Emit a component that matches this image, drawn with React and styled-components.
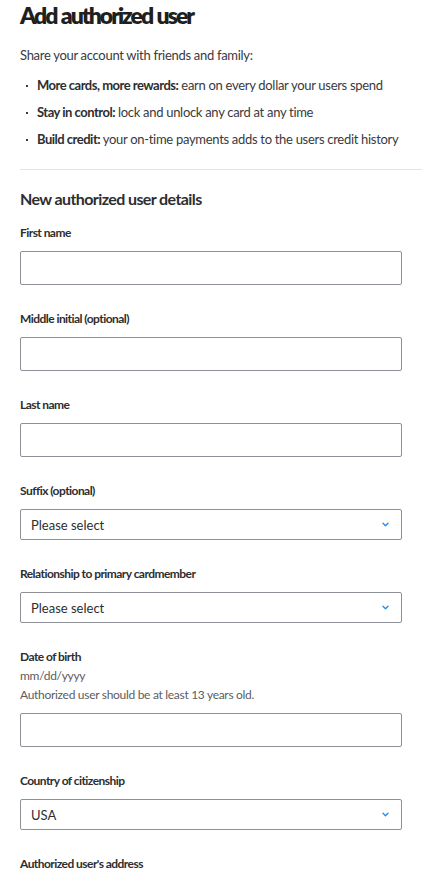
import styled, {createGlobalStyle} from "styled-components";

const GlobalStyle = createGlobalStyle`
  body {
    margin: 0;
    background: #ffffff;
    font-family: Lato, "Open Sans", Arial, sans-serif;
    color: #393a3d;
  }
`

const Page = styled.div`
  padding-left: 20px;
  overflow: hidden;
`

const Title = styled.h1`
  margin: 0;
  font-size: 23px;
  line-height: 30px;
  font-weight: 800;
  letter-spacing: -2px;
  word-spacing: 1px;
  color: #1f1f21;
`

const Intro = styled.p`
  margin: 16px 0 0;
  font-size: 13px;
  line-height: 18px;
  letter-spacing: -0.3px;
  color: #393a3d;
`

const Benefits = styled.ul`
  list-style: none;
  margin: 12px 0 0;
  padding: 0 0 0 6px;
  display: flex;
  flex-direction: column;
  gap: 9px;
`

const Benefit = styled.li`
  position: relative;
  padding-left: 11px;
  font-size: 13px;
  line-height: 18px;
  letter-spacing: -0.3px;
  white-space: nowrap;
  color: #393a3d;

  &::before {
    content: "";
    position: absolute;
    left: 0;
    top: 9px;
    width: 2px;
    height: 2px;
    background: #393a3d;
  }

  b {
    font-weight: 700;
    letter-spacing: -0.5px;
    color: #2d2e30;
  }
`

const Divider = styled.hr`
  border: 0;
  border-top: 1px solid #e3e5e8;
  margin: 21px 0 0;
`

const Form = styled.div`
  padding-right: 20px;
`

const SectionTitle = styled.h2`
  margin: 18px 0 0;
  font-size: 16px;
  line-height: 22px;
  font-weight: 700;
  letter-spacing: -0.6px;
  color: #2d2e30;
`

const FieldBlock = styled.div`
  margin-top: ${p => p.$first ? "14px" : "25px"};
  display: flex;
  flex-direction: column;
`

const Label = styled.label`
  font-size: 12px;
  line-height: 18px;
  font-weight: 700;
  letter-spacing: -0.55px;
  color: #2d2e30;
  margin-bottom: ${p => p.$hinted ? "0" : "9px"};
`

const Hint = styled.div`
  font-size: 12px;
  line-height: 18px;
  letter-spacing: -0.3px;
  color: #5c5d60;
  margin-top: 1px;
  margin-bottom: ${p => p.$last ? "9px" : "0"};
`

const TextInput = styled.input`
  box-sizing: border-box;
  width: 100%;
  height: 34px;
  margin: 0;
  border: 1px solid #8d9096;
  border-radius: 2px;
  background: #fff;
  padding: 0 10px;
  font-family: inherit;
  font-size: 13px;
`

const SelectBox = styled.div`
  box-sizing: border-box;
  width: 100%;
  height: 31px;
  border: 1px solid #8d9096;
  border-radius: 2px;
  background: #fff;
  padding: 0 12px 0 10px;
  display: flex;
  align-items: center;
  justify-content: space-between;
  font-size: 13px;
  color: #2d2e30;
`

const Chevron = () => (
    <svg width="7" height="5" viewBox="0 0 7 5">
        <path d="M1 1.2l2.5 2.5 2.5-2.5" fill="none" stroke="#2b8ae6" strokeWidth="1.4" strokeLinecap="round" strokeLinejoin="round"/>
    </svg>
)

const fields = [
    {label: "First name", type: "input"},
    {label: "Middle initial (optional)", type: "input"},
    {label: "Last name", type: "input"},
    {label: "Suffix (optional)", type: "select", value: "Please select"},
    {label: "Relationship to primary cardmember", type: "select", value: "Please select"},
    {label: "Date of birth", type: "input", hints: ["mm/dd/yyyy", "Authorized user should be at least 13 years old."]},
    {label: "Country of citizenship", type: "select", value: "USA"},
]

const App = () => {
    return (
        <Page>
            <GlobalStyle/>
            <Title>Add authorized user</Title>
            <Intro>Share your account with friends and family:</Intro>
            <Benefits>
                <Benefit><b>More cards, more rewards:</b> earn on every dollar your users spend</Benefit>
                <Benefit><b>Stay in control:</b> lock and unlock any card at any time</Benefit>
                <Benefit><b>Build credit:</b> your on-time payments adds to the users credit history</Benefit>
            </Benefits>
            <Divider/>
            <Form>
                <SectionTitle>New authorized user details</SectionTitle>
                {fields.map((f, i) =>
                    <FieldBlock key={f.label} $first={i === 0}>
                        <Label $hinted={!!f.hints}>{f.label}</Label>
                        {f.hints && f.hints.map((h, j) =>
                            <Hint key={h} $last={j === f.hints.length - 1}>{h}</Hint>
                        )}
                        {f.type === "input"
                            ? <TextInput type="text"/>
                            : <SelectBox>{f.value}<Chevron/></SelectBox>}
                    </FieldBlock>
                )}
                <FieldBlock>
                    <Label>Authorized user's address</Label>
                </FieldBlock>
            </Form>
        </Page>
    )
}

export default App
